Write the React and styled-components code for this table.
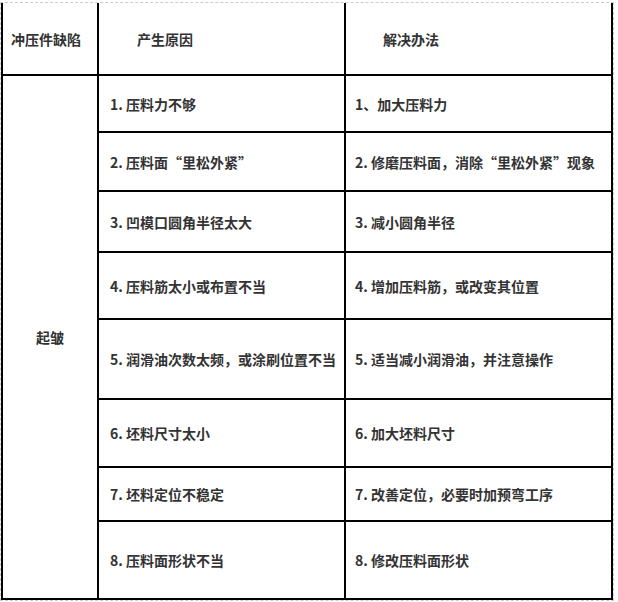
import React from "react";
import styled, { createGlobalStyle } from "styled-components";

const GlobalStyle = createGlobalStyle`
  html, body {
    margin: 0;
    padding: 0;
    background: #ffffff;
  }
  body {
    font-family: "Noto Sans CJK SC", "Noto Sans", sans-serif;
  }
`;

const Frame = styled("div")`
  margin-top: 2px;
  width: 614px;
  height: 599px;
  box-sizing: border-box;
  border: 1px dashed #cccccc;
`;

const Grid = styled("div")`
  display: grid;
  grid-template-columns: 94px 245px 265px;
  grid-template-rows: 71px 55px 57px 59px 65px 78px 66px 52px 76px;
  gap: 2px;
  padding: 0 2px 2px 2px;
  background: #000000;
  width: 612px;
  box-sizing: border-box;
`;

const Cell = styled("div")`
  display: flex;
  align-items: center;
  justify-content: ${(p) => (p.$center ? "center" : "flex-start")};
  background: #ffffff;
  padding-left: ${(p) => p.$indent || 0}px;
  font-family: "Noto Sans CJK SC", "Noto Sans", sans-serif;
  font-size: 14px;
  font-weight: 700;
  color: #333333;
  white-space: nowrap;
  overflow: hidden;
  ${(p) => p.$span && `grid-row: span ${p.$span};`}
`;

const rows = [
  ["1. 压料力不够", "1、加大压料力"],
  ["2. 压料面“里松外紧”", "2. 修磨压料面，消除“里松外紧”现象"],
  ["3. 凹模口圆角半径太大", "3. 减小圆角半径"],
  ["4. 压料筋太小或布置不当", "4. 增加压料筋，或改变其位置"],
  ["5. 润滑油次数太频，或涂刷位置不当", "5. 适当减小润滑油，并注意操作"],
  ["6. 坯料尺寸太小", "6. 加大坯料尺寸"],
  ["7. 坯料定位不稳定", "7. 改善定位，必要时加预弯工序"],
  ["8. 压料面形状不当", "8. 修改压料面形状"],
];

export default function App() {
  return (
    <React.Fragment>
      <GlobalStyle />
      <Frame>
        <Grid>
          <Cell $indent={8}>冲压件缺陷</Cell>
          <Cell $indent={38}>产生原因</Cell>
          <Cell $indent={37}>解决办法</Cell>
          <Cell $span={8} $center>
            起皱
          </Cell>
          {rows.map(([cause, fix]) => (
            <React.Fragment key={cause}>
              <Cell $indent={11}>{cause}</Cell>
              <Cell $indent={9}>{fix}</Cell>
            </React.Fragment>
          ))}
        </Grid>
      </Frame>
    </React.Fragment>
  );
}
